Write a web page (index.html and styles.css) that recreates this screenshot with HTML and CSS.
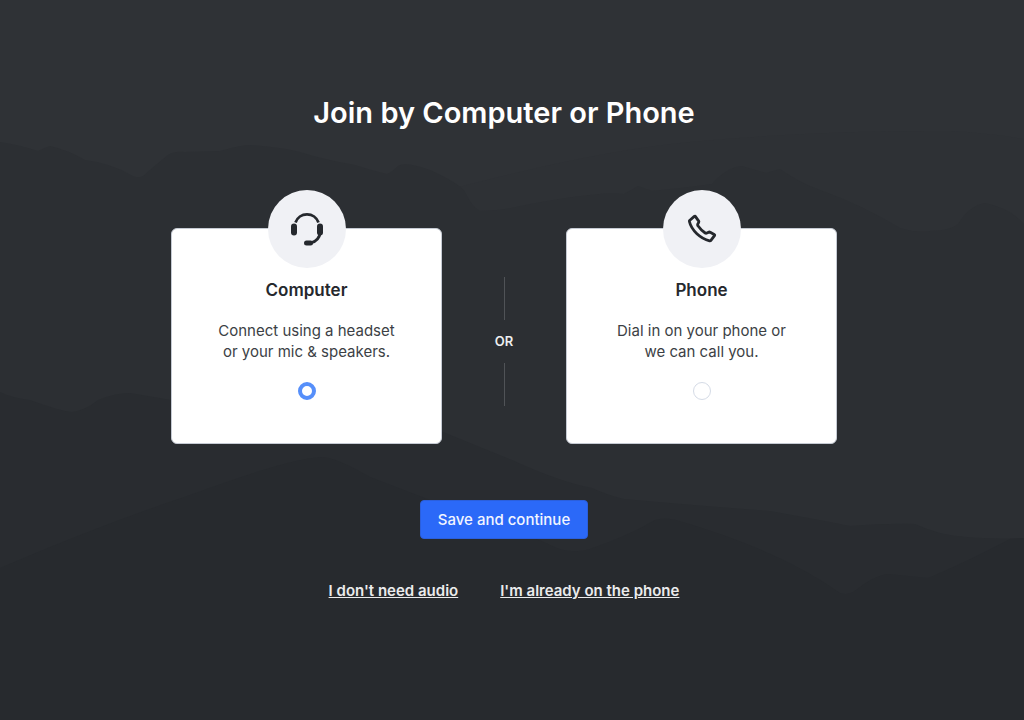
FILE: index.html
```html
<!DOCTYPE html>
<html lang="en">
<head>
    <meta charset="utf-8">
    <title>Join by Computer or Phone</title>
    <link rel="stylesheet" href="styles.css">
</head>

<body>
    <!-- Mountain backdrop -->
    <svg class="backdrop" viewBox="0 0 1024 720" preserveAspectRatio="none" aria-hidden="true">
        <path class="haze" d="M455 188 Q600 150 690 142 Q820 130 950 131 Q990 133 1024 139 V720 H455 Z"/>
        <path class="ridge-back" d="M0 142 Q20 145 38 151 Q44 148 50 146 Q68 150 85 160 Q110 163 131 175 Q137 179 143 176 Q158 163 168 155 Q174 151 185 152 L220 151 Q240 145 250 145 Q280 147 300 152 Q325 160 355 165 Q370 170 387 174 Q392 172 398 166 Q405 161 430 170 Q459 183 465 192 Q472 207 480 211 Q500 211 520 206 Q560 198 590 195 Q610 192 624 194 L638 186 L652 191 Q690 187 712 184 Q727 167 742 166 L766 173 L780 169 Q800 183 820 190 Q860 204 900 228 Q915 233 930 231 Q950 231 958 224 Q970 205 985 203 Q1010 208 1024 224 V720 H0 Z"/>
        <path class="ridge-middle" d="M0 392 Q12 398 30 400 Q60 411 72 412 Q86 410 98 400 Q115 393 130 393 L171 400 Q320 390 443 432 L512 460 Q560 482 592 488 Q607 495 624 499 Q690 505 770 511 Q820 520 850 526 Q890 523 915 524 Q928 530 940 533 Q970 540 1024 538 V720 H0 Z"/>
        <path class="ridge-front" d="M0 568 Q100 525 190 495 Q290 458 322 457 Q335 457 370 477 L430 500 Q530 535 550 545 Q570 555 590 549 Q630 535 655 520 Q665 517 676 520 Q780 550 840 593 Q848 596 856 590 Q875 575 888 574 L928 578 Q960 565 1010 539 L1024 538 V720 H0 Z"/>
    </svg>

    <form class="audio-form">
        <h1>Join by Computer or Phone</h1>

        <div class="choices">
            <label class="card">
                <span class="badge">
                    <svg width="34" height="34" viewBox="0 0 34 34" fill="none" stroke="currentColor" aria-hidden="true">
                        <path d="M5.5 10.5 A12.2 12.2 0 0 1 28.5 10.5" stroke-width="2.8"/>
                        <rect x="1" y="11.5" width="6" height="12" rx="3" fill="currentColor" stroke="none"/>
                        <rect x="27" y="11.5" width="6" height="12" rx="3" fill="currentColor" stroke="none"/>
                        <path d="M30.5 20 C29.5 26 25.5 30 20.5 31" stroke-width="2.8"/>
                        <rect x="14" y="28.5" width="9" height="5" rx="2.5" fill="currentColor" stroke="none"/>
                    </svg>
                </span>
                <span class="card-title">Computer</span>
                <span class="card-text">Connect using a headset<br>or your mic &amp; speakers.</span>
                <input type="radio" name="audio" value="computer" checked>
            </label>

            <div class="divider">OR</div>

            <label class="card">
                <span class="badge">
                    <svg width="34" height="34" viewBox="0 0 34 34" fill="none" stroke="currentColor" stroke-width="2.8" stroke-linejoin="round" aria-hidden="true">
                        <path d="M4.9 8.2 L9.3 4.4 Q10 3.9 10.5 4.6 L13.7 9.1 Q14.1 9.7 13.7 10.4 L12.7 12.2 Q12.3 13 12.9 13.8 Q15.8 18 20.2 21 Q21 21.5 21.9 21 L24 20.1 Q24.6 19.9 25.2 20.2 L29.2 22.4 Q30 22.9 29.5 23.6 L26.1 28.2 Q25.6 28.9 24.6 28.8 C15.5 26.5 6.5 18.5 4.4 9.5 Q4.2 8.7 4.9 8.2 Z"/>
                    </svg>
                </span>
                <span class="card-title">Phone</span>
                <span class="card-text">Dial in on your phone or<br>we can call you.</span>
                <input type="radio" name="audio" value="phone">
            </label>
        </div>

        <button type="submit">Save and continue</button>

        <div class="links">
            <a href="#">I don't need audio</a>
            <a href="#">I'm already on the phone</a>
        </div>
    </form>
</body>
</html>
```
FILE: styles.css
```css
* {
    box-sizing: border-box;
}

body {
    margin: 0;
    min-height: 100vh;
    background: #2f3236;
    color: white;
    font-family: Inter, "Liberation Sans", sans-serif;
}

/* Mountain backdrop */
.backdrop {
    position: absolute;
    top: 0;
    left: 0;
    width: 100%;
    height: 100%;
    z-index: -1;
}
.haze {
    fill: #2e3135;
}
.ridge-back {
    fill: #2c2f33;
}
.ridge-middle {
    fill: #292c30;
}
.ridge-front {
    fill: #272a2e;
}

/* Page column */
.audio-form {
    display: flex;
    flex-direction: column;
    align-items: center;
    padding: 95px 16px 24px 0;
}
h1 {
    margin: 0 0 97px;
    font-size: 29px;
    line-height: 36px;
    font-weight: 600;
}

/* Computer and phone cards */
.choices {
    display: flex;
    justify-content: center;
    width: 100%;
    max-width: 666px;
}
.card {
    display: flex;
    flex: 1;
    flex-direction: column;
    align-items: center;
    padding-bottom: 43px;
    background: white;
    border: 1px solid #c5cad3;
    border-radius: 6px;
    color: #25282d;
    text-align: center;
    cursor: pointer;
}
.badge {
    display: flex;
    align-items: center;
    justify-content: center;
    width: 78px;
    height: 78px;
    margin-top: -39px;
    border-radius: 50%;
    background: #f0f1f5;
}
.card-title {
    margin-top: 10px;
    font-size: 17px;
    line-height: 24px;
    font-weight: 600;
}
.card-text {
    margin-top: 18px;
    color: #3c3f45;
    font-size: 15px;
    line-height: 21px;
}
.card input {
    appearance: none;
    width: 18px;
    height: 18px;
    margin: 20px 0 0;
    border: 1px solid #d5dbe6;
    border-radius: 50%;
    background: white;
}
.card input:checked {
    border: 4px solid #568ffa;
}

/* OR with a line above and below */
.divider {
    display: flex;
    flex-direction: column;
    align-items: center;
    justify-content: center;
    gap: 12px;
    width: 124px;
    padding-top: 10px;
    color: #eeeff0;
    font-size: 13px;
    line-height: 19px;
    font-weight: 600;
}
.divider::before,
.divider::after {
    content: "";
    width: 1px;
    height: 43px;
    background: #505357;
}

button {
    margin-top: 56px;
    padding: 9px 17px;
    border: 1px solid #2b5fdc;
    border-radius: 4px;
    background: #2b69f8;
    color: #f2f5ff;
    font-family: inherit;
    font-size: 15px;
    line-height: 19px;
    font-weight: 500;
    cursor: pointer;
}

.links {
    display: flex;
    gap: 42px;
    margin-top: 42px;
}
.links a {
    color: #ebebec;
    font-size: 15px;
    line-height: 20px;
    font-weight: 600;
}
```
